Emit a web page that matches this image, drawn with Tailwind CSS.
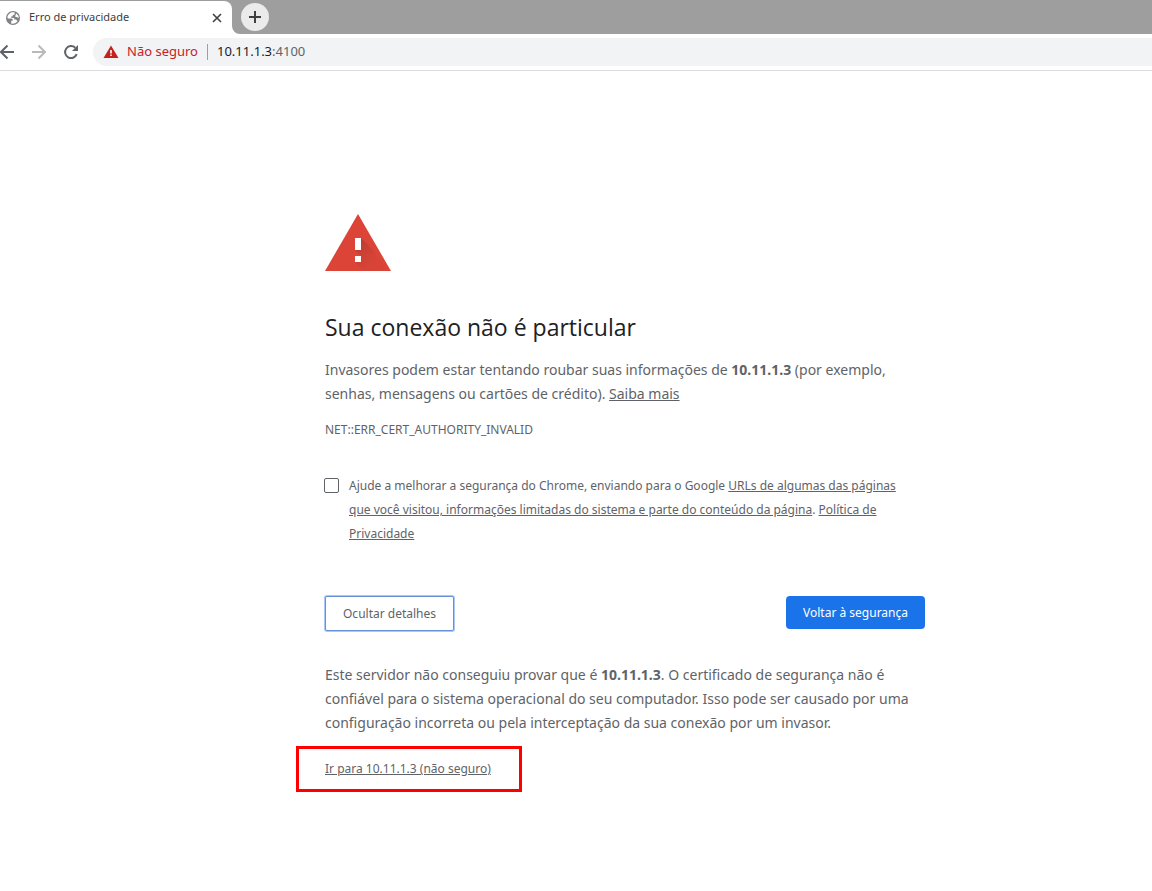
<!DOCTYPE html>
<html lang="pt-BR">

<head>
    <meta charset="UTF-8">
    <meta name="viewport" content="width=device-width, initial-scale=1.0">
    <title>Erro de privacidade</title>
    <script src="https://cdn.jsdelivr.net/npm/@tailwindcss/browser@4"></script>
</head>

<body class="bg-white min-h-screen font-['Noto_Sans',sans-serif] text-[#5f6368]">
    <!-- Tab strip -->
    <header>
        <div class="flex h-[34px] bg-[#9e9e9e] pt-px">
            <div class="relative flex items-center w-[232px] bg-white rounded-tr-lg pl-1.5 pr-2.5">
                <svg class="w-3.5 h-3.5 shrink-0" viewBox="0 0 14 14">
                    <circle cx="7" cy="7" r="7" fill="#808285" />
                    <path d="M8.6 1.4C5 .8 1.800 3 1.400 6.400L2 7.600H5.200Q6.800 7.600 6.800 9V9.800H5.200V12.400Q9.400 13.400 11.600 10.200L10 8.400H8.200V7H5.400V5.200H6.800V3.800H8.600zM10.200 2.600 9.400 4.600V6H11L12.600 7.200Q12.800 4.400 10.200 2.600z" fill="#fff" />
                </svg>
                <span class="ml-[9px] flex-1 text-[11px] text-[#3c4043]">Erro de privacidade</span>
                <button type="button" aria-label="Fechar guia">
                    <svg class="w-2.5 h-2.5" viewBox="0 0 10 10" fill="none" stroke="#3c4043" stroke-width="1.6">
                        <path d="M1 1 9 9M9 1 1 9" />
                    </svg>
                </button>
                <svg class="absolute left-full bottom-0 w-2 h-2" viewBox="0 0 8 8">
                    <path d="M0 0a8 8 0 0 0 8 8H0z" fill="#fff" />
                </svg>
            </div>
            <button type="button" aria-label="Nova guia"
                class="flex items-center justify-center w-7 h-7 mt-0.5 ml-[9px] rounded-full bg-[#ebebeb]">
                <svg class="w-3 h-3" viewBox="0 0 12 12" fill="none" stroke="#3c4043" stroke-width="2">
                    <path d="M6 0v12M0 6h12" />
                </svg>
            </button>
        </div>

        <!-- Toolbar -->
        <div class="flex items-center h-[37px] border-b border-[#dadce0]">
            <button type="button" aria-label="Voltar">
                <svg class="w-3.5 h-4" viewBox="0 0 14 16" fill="none" stroke="#5f6368" stroke-width="2">
                    <path d="M14 8H1M7.5 1.5 1 8l6.5 6.5" />
                </svg>
            </button>
            <button type="button" class="ml-[18px]" aria-label="Avançar">
                <svg class="w-3.5 h-4" viewBox="0 0 14 16" fill="none" stroke="#bababa" stroke-width="2">
                    <path d="M0 8h13M6.5 1.5 13 8l-6.5 6.5" />
                </svg>
            </button>
            <button type="button" class="ml-[17px]" aria-label="Atualizar">
                <svg class="w-4 h-4" viewBox="0 0 16 16">
                    <path d="M13.7 10.2A6 6 0 1 1 12.3 3.8" fill="none" stroke="#5f6368" stroke-width="2" />
                    <path d="M15 1v6H9z" fill="#5f6368" />
                </svg>
            </button>
            <div class="flex items-center flex-1 h-7 ml-3.5 pl-2.5 rounded-l-full bg-[#f1f3f4] text-[13px]">
                <svg class="w-4 h-4 shrink-0" viewBox="0 0 16 16">
                    <path d="M8 1.5 15.5 14H.5z" fill="#c5221f" />
                    <path d="M7.2 6h1.6v3.5H7.2zM7.2 10.5h1.6v1.6H7.2z" fill="#fff" />
                </svg>
                <span class="ml-2 text-[#c5221f]">Não seguro</span>
                <span class="w-px h-4 mx-[9px] bg-[#9aa0a6]"></span>
                <a href="#" class="text-[#202124]">10.11.1.3<span class="text-[#5f6368]">:4100</span></a>
            </div>
        </div>
    </header>

    <!-- Warning page -->
    <main class="pl-[325px] pr-6 pt-[143px]">
        <div class="max-w-[600px] text-sm leading-6">
            <svg class="w-[66px] h-[57px]" viewBox="0 0 66 57">
                <defs>
                    <linearGradient id="shade" x1="32" y1="28" x2="50" y2="46" gradientUnits="userSpaceOnUse">
                        <stop offset="0" stop-color="#a83a30" stop-opacity=".7" />
                        <stop offset="1" stop-color="#c23f33" stop-opacity=".15" />
                    </linearGradient>
                </defs>
                <path d="M33 0 66 57H0z" fill="#db4437" />
                <path d="M36 24 49.5 37.5 60.8 57H39L30 48l6-6-6-6z" fill="url(#shade)" />
                <path d="M30 24h6v12h-6zM30 42h6v6h-6z" fill="#fff" />
            </svg>

            <h1 class="mt-10 font-['Open_Sans',sans-serif] text-[23px] leading-8 text-[#202124]">Sua conexão não é particular</h1>
            <p class="mt-[15px]">Invasores podem estar tentando roubar suas informações de <strong>10.11.1.3</strong> (por exemplo, senhas, mensagens ou cartões de crédito). <a href="#" class="underline">Saiba mais</a></p>
            <p class="mt-3 text-xs leading-6">NET::ERR_CERT_AUTHORITY_INVALID</p>

            <div class="flex mt-8 text-xs leading-6">
                <input type="checkbox" id="report"
                    class="appearance-none shrink-0 w-[15px] h-[15px] mt-1 -ml-px mr-2.5 border border-[#5f6368] rounded-xs bg-white checked:bg-[#1a73e8]">
                <label for="report" class="pr-3">Ajude a melhorar a segurança do Chrome, enviando para o Google <a href="#" class="underline">URLs de algumas das páginas que você visitou, informações limitadas do sistema e parte do conteúdo da página</a>. <a href="#" class="underline">Política de Privacidade</a></label>
            </div>

            <div class="flex items-start justify-between mt-[50px] text-xs">
                <button type="button"
                    class="h-[35px] px-[17px] border border-[#6691d6] rounded-xs bg-white ring-1 ring-[#a9c7f7]">Ocultar detalhes</button>
                <button type="button" class="h-[33px] px-[17px] rounded-sm bg-[#1a73e8] text-white">Voltar à segurança</button>
            </div>

            <p class="mt-8">Este servidor não conseguiu provar que é <strong>10.11.1.3</strong>. O certificado de segurança não é confiável para o sistema operacional do seu computador. Isso pode ser causado por uma configuração incorreta ou pela interceptação da sua conexão por um invasor.</p>
            <div class="inline-block mt-[11px] -ml-[29px] py-2 pl-[26px] pr-7 border-3 border-[#ff0000] text-xs leading-6">
                <a href="#" class="underline">Ir para 10.11.1.3 (não seguro)</a>
            </div>
        </div>
    </main>
</body>

</html>
